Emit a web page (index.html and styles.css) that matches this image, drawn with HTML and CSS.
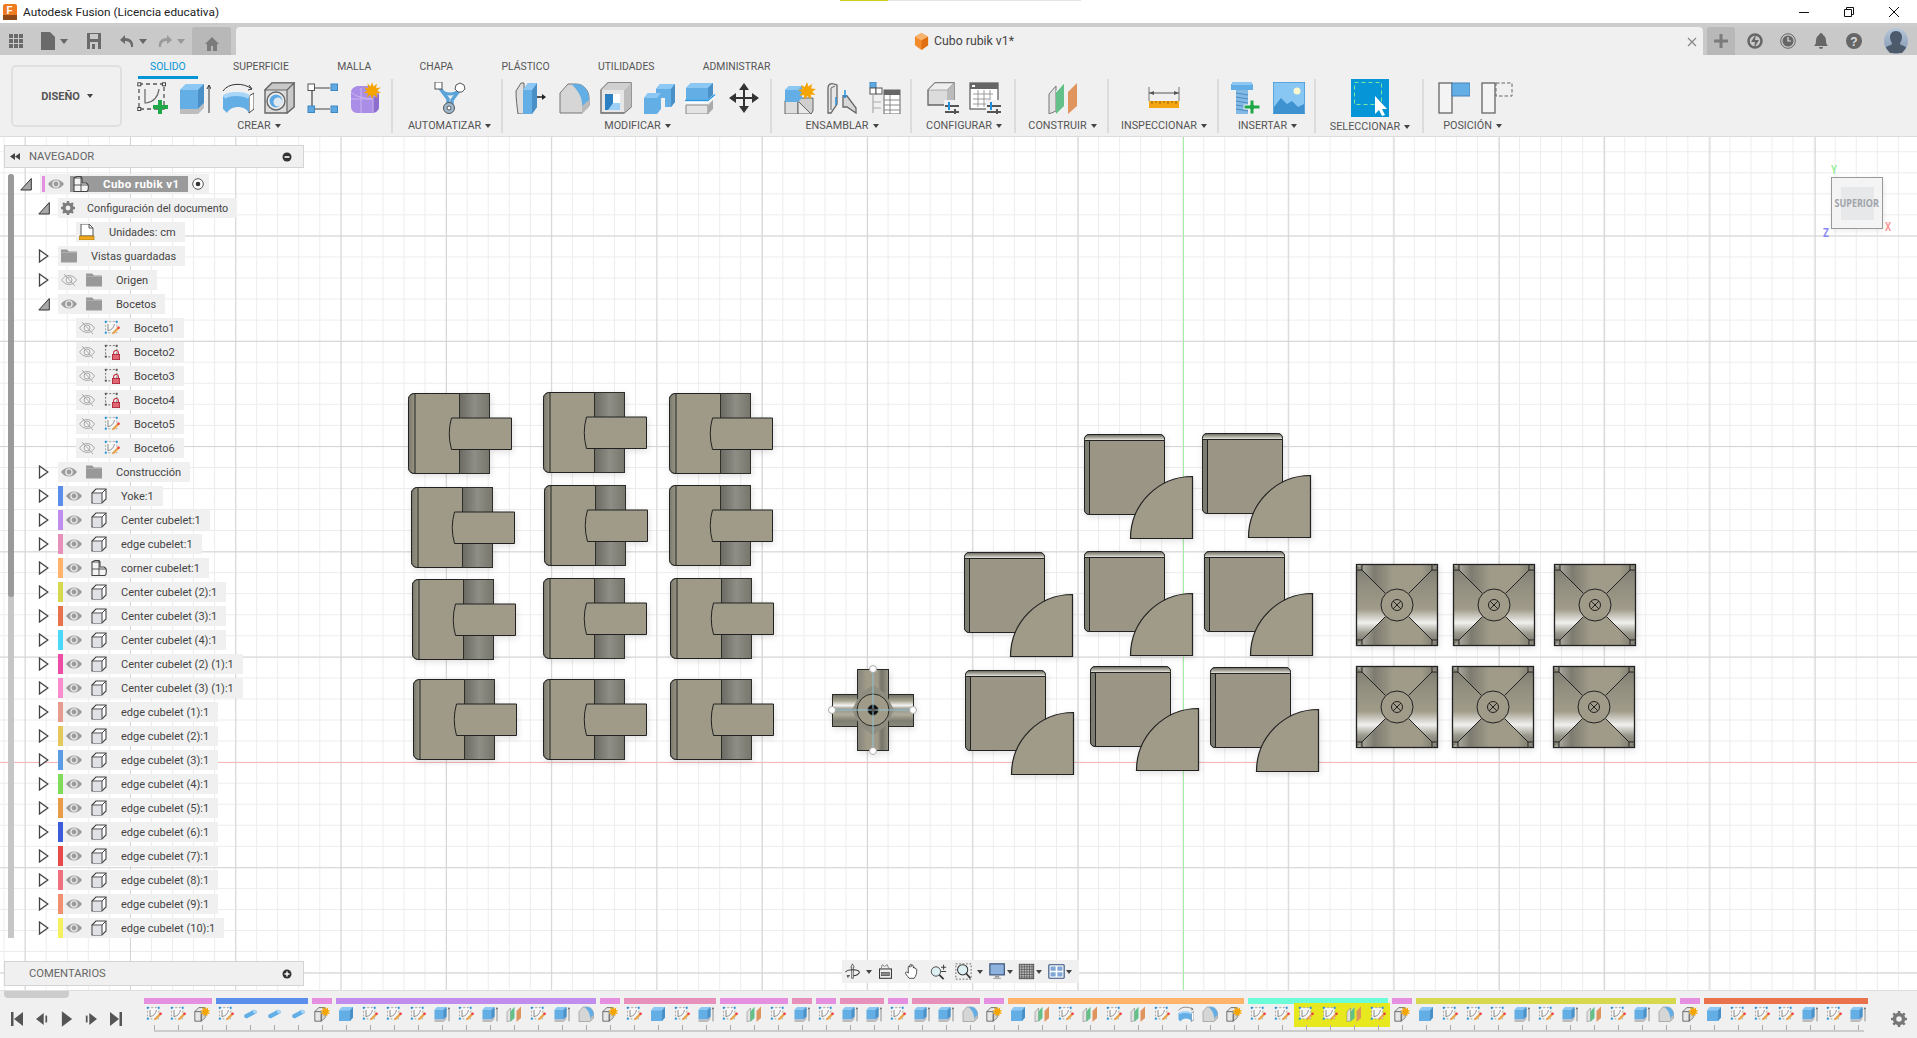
FILE: index.html
```html
<!DOCTYPE html>
<html lang="es">
<head>
<meta charset="utf-8">
<title>Autodesk Fusion</title>
<link rel="stylesheet" href="styles.css">
</head>
<body>
<svg class="sprite" xmlns="http://www.w3.org/2000/svg">
<defs>
<symbol id="sketchnew" viewBox="0 0 32 32"><rect x="2" y="2" width="25" height="25" fill="none" stroke="#555" stroke-width="1.3" stroke-dasharray="4 3"/><rect x=".8" y=".8" width="3" height="3" fill="#fff" stroke="#444"/><rect x="25.5" y=".8" width="3" height="3" fill="#fff" stroke="#444"/><rect x=".8" y="25.5" width="3" height="3" fill="#fff" stroke="#444"/><path d="M8 7v14h2M9 21c7-1 12-6 13-14" fill="none" stroke="#666" stroke-width="1.2"/><path d="M21 18h4v5h6v4h-6v5h-4v-5h-5v-4h5z" fill="#1fa848"/></symbol>
<symbol id="extrude" viewBox="0 0 32 32"><path d="M1 8l6-6h18v19l-6 6H1z" fill="#64aee6"/><path d="M1 8l6-6h18l-6 6z" fill="#8dc8f5"/><path d="M19 8l6-6v19l-6 6z" fill="#4a8fc6"/><path d="M1 27h18l6-6v5l-6 6H1z" fill="#bdbdbd"/><path d="M30 31V4M28 7l2-4 2 4" fill="none" stroke="#333" stroke-width="1"/></symbol>
<symbol id="box" viewBox="0 0 32 32"><path d="M2 9l6-7h22v21l-6 7H2z" fill="#64aee6"/><path d="M2 9l6-7h22l-6 7z" fill="#8dc8f5"/><path d="M24 9l6-7v21l-6 7z" fill="#4a8fc6"/></symbol>
<symbol id="revolve" viewBox="0 0 32 32"><path d="M1 9C6 1 21 0 30 7" fill="none" stroke="#333"/><path d="M27 3l3 4-4 1" fill="none" stroke="#333"/><path d="M27 14l5-3v16l-5 4z" fill="#fff" stroke="#444"/><path d="M1 15c6-6 20-6 26 0l-2 8H3z" fill="#9dd0f6"/><path d="M1 15v12l4 4c4-8 18-8 22 0V15c-5-5-21-5-26 0z" fill="#64aee6"/><path d="M2 15c6-4 19-4 25 0" fill="none" stroke="#a8d6f8" stroke-width="4"/></symbol>
<symbol id="hole" viewBox="0 0 32 32"><path d="M1 8l7-7h22v24l-7 6H1z" fill="#dcdcdc" stroke="#666" stroke-width="1.4"/><path d="M23 8l7-7v24l-7 6zM1 8l7-7h22l-7 7z" fill="#c8c8c8" stroke="#666" stroke-width="1.2"/><circle cx="12" cy="19" r="9" fill="#eee" stroke="#666" stroke-width="1.4"/><circle cx="12" cy="19" r="6.5" fill="#5ea9e2"/><circle cx="14" cy="20" r="4.5" fill="#dfe9f2"/></symbol>
<symbol id="pattern" viewBox="0 0 32 32"><path d="M8 6h15M5 9v15M8 27h15" stroke="#444" stroke-width="1.2" fill="none"/><rect x="1" y="2" width="6.5" height="6.5" fill="#fff" stroke="#555"/><rect x="24" y="2" width="6.5" height="6.5" fill="#5ea9e2" stroke="#3f86bf"/><rect x="1" y="24" width="6.5" height="6.5" fill="#5ea9e2" stroke="#3f86bf"/><rect x="24" y="24" width="6.5" height="6.5" fill="#5ea9e2" stroke="#3f86bf"/></symbol>
<symbol id="form" viewBox="0 0 32 32"><path d="M2 10c0-3 3-5 6-6h14c3 1 8 4 8 8v13c0 3-3 6-6 6H8c-3 0-6-3-6-6z" fill="#a98de6"/><path d="M22 31c4 0 8-3 8-6V12l-6 5v14z" fill="#8d6ecf"/><path d="M2 17h22M12 6v25M2 10c4 4 10 6 22 7v14" fill="none" stroke="#c9b6f0" stroke-width="1"/><path d="M23 0l1.6 4.6 3.4-3.2-1 4.6 4.8-.6-3.6 3.1 4 2.5-4.8.3 1 4.7-3.5-3.2L23 17l-1.6-4.2-3.6 3 1.2-4.6-4.8-.2 4-2.6-3.5-3 4.7.6-1-4.6 3.4 3.2z" fill="#f5a400"/></symbol>
<symbol id="automate" viewBox="0 0 32 32"><path d="M5 5l9 12v9M27 6L18 18v8" fill="none" stroke="#5ba3d9" stroke-width="3.5"/><path d="M8 9c4 4 12 4 16 0" fill="none" stroke="#5ba3d9" stroke-width="3"/><rect x="1" y="0" width="7" height="7" fill="#fff" stroke="#555"/><path d="M22 3l4-2 4 2 1 4-3 3-4 0-3-3z" fill="#fff" stroke="#555"/><circle cx="15" cy="26" r="5.5" fill="#9db8cc" stroke="#555"/><circle cx="15" cy="26" r="2" fill="#fff" stroke="#555"/></symbol>
<symbol id="press" viewBox="0 0 32 32"><path d="M1 9l5-8h3v31H3c-1-8-2-15-2-23z" fill="#dedede" stroke="#666"/><path d="M8 8l5-7h9v24l-5 7H8z" fill="#64aee6"/><path d="M17 8l5-7v24l-5 7z" fill="#4a8fc6"/><path d="M8 8l5-7h9l-5 7z" fill="#8dc8f5"/><path d="M22 15h7" stroke="#222" stroke-width="1.5"/><path d="M27 12l4 3-4 3z" fill="#222"/></symbol>
<symbol id="fillet" viewBox="0 0 32 32"><path d="M2 11l8-9h8c8 0 13 7 13 14v8l-7 7H2z" fill="#d6d6d6" stroke="#777"/><path d="M13 2h5c8 0 13 7 13 14v5l-7 4c1-9-4-17-11-23z" fill="#64aee6"/><path d="M24 32l7-7v-7l-7 6z" fill="#bbb"/></symbol>
<symbol id="shell" viewBox="0 0 32 32"><path d="M1 8l7-7h23v24l-7 6H1z" fill="#e6e6e6" stroke="#666" stroke-width="1.3"/><path d="M24 8l7-7v24l-7 6z" fill="#bdbdbd"/><path d="M1 8l7-7h23l-7 7z" fill="#d0d0d0"/><rect x="5" y="12" width="15" height="16" fill="#fff"/><path d="M5 12h8v9h7v7H5z" fill="#2c7fc0"/><path d="M13 21l7 0v7H8z" fill="#9dd0f6"/></symbol>
<symbol id="combine" viewBox="0 0 32 32"><path d="M13 7l4-5h15v18l-4 5h-6v-9l-9 0z" fill="#64aee6"/><path d="M13 7l4-5h15l-4 5z" fill="#8dc8f5"/><path d="M28 7l4-5v18l-4 5z" fill="#4a8fc6"/><path d="M1 16l4-5h13v16l-4 5H1z" fill="#64aee6"/><path d="M1 16l4-5h13l-4 5z" fill="#8dc8f5"/></symbol>
<symbol id="split" viewBox="0 0 32 32"><path d="M1 6l5-5h22v14l-5 5H1z" fill="#64aee6"/><path d="M1 6l5-5h22l-5 5z" fill="#8dc8f5"/><path d="M23 6l5-5v14l-5 5z" fill="#4a8fc6"/><path d="M0 20h22l8-7" fill="none" stroke="#fff" stroke-width="2.5"/><path d="M0 18.5h23l7-6" fill="none" stroke="#2f9ae0" stroke-width="1.5"/><path d="M1 23h22v9H1z" fill="#e4e4e4" stroke="#888"/><path d="M23 23l5-5v9l-5 5z" fill="#aaa"/></symbol>
<symbol id="move" viewBox="0 0 32 32"><path d="M15 8h2v7h7v-4l7 5-7 5v-4h-7v7h4l-5 7-5-7h4v-7H8v4l-7-5 7-5v4h7V8h-4l5-7 5 7z" fill="#333"/></symbol>
<symbol id="newcomp" viewBox="0 0 32 32"><rect x="1" y="19" width="13" height="13" fill="#ddd" stroke="#666"/><rect x="14" y="19" width="13" height="13" fill="#e8e8e8" stroke="#666"/><path d="M14 19l3-3h12v13l-2 3z" fill="#cfcfcf" stroke="#666"/><path d="M1 8l4-4h13v12l-4 4H1z" fill="#64aee6"/><path d="M1 8l4-4h13l-4 4z" fill="#8dc8f5"/><path d="M23 0l1.4 4.6 3.6-2.6-.8 4.6 4.8.4-3.8 2.8 3.2 3.2-4.6-.5.2 4.5-3.6-3-2.8 3.7-.8-4.7-4.4 1 2.6-3.8-4-2.2 4.6-1-1.8-4.3 4 2.2z" fill="#f5a400"/></symbol>
<symbol id="joint" viewBox="0 0 32 32"><path d="M2 6c0-4 3-5 6-4l3 1v19l-6 9H2z" fill="#e6e6e6" stroke="#666" stroke-width="1.3"/><path d="M17 14l4 0 9 12v5l-9-6h-4z" fill="#d8d8d8" stroke="#666" stroke-width="1.3"/><path d="M9 4l-4 2v22" fill="none" stroke="#666"/><path d="M10 15v8M19 8v8" stroke="#2b8fd8" stroke-width="1.5"/><path d="M17 13l2 3 2-3" fill="none" stroke="#2b8fd8"/></symbol>
<symbol id="bom" viewBox="0 0 32 32"><rect x="1" y="0" width="6" height="6" fill="#5ea9e2" stroke="#3f86bf"/><rect x="1" y="6" width="6" height="6" fill="#fff" stroke="#555"/><rect x="7" y="6" width="6" height="6" fill="#fff" stroke="#555"/><path d="M4 13v18M4 20h8M4 26h8" stroke="#aaa" stroke-width="1.2"/><rect x="15" y="8" width="16" height="24" fill="#fff" stroke="#666"/><rect x="15" y="8" width="16" height="5" fill="#666"/><path d="M15 18h16M15 23h16M15 28h16M21 13v19" stroke="#888"/></symbol>
<symbol id="config" viewBox="0 0 32 32"><path d="M1 8l7-7h19v22H1z" fill="#dcdcdc" stroke="#666" stroke-width="1.3"/><path d="M20 8l7-7v22h-7z" fill="#bbb"/><path d="M1 8l7-7h19l-7 7z" fill="#eee" stroke="#777" stroke-width=".5"/><rect x="17" y="18" width="15" height="14" fill="#f0f0f0"/><path d="M18 24h14M18 30h14" stroke="#555" stroke-width="2"/><rect x="21" y="20" width="2" height="8" fill="#1e90e0"/><rect x="27" y="27" width="2" height="5" fill="#555"/></symbol>
<symbol id="ctable" viewBox="0 0 32 32"><rect x="1" y="1" width="28" height="26" fill="#fff" stroke="#666" stroke-width="1.3"/><rect x="1" y="1" width="28" height="6" fill="#666"/><rect x="3" y="3" width="3" height="2" fill="#fff"/><path d="M4 12h20M4 17h17M4 22h13M9 8v17M15 8v17M21 8v10" stroke="#999"/><rect x="17" y="18" width="15" height="14" fill="#f0f0f0"/><path d="M18 24h14M18 30h14" stroke="#555" stroke-width="2"/><rect x="21" y="20" width="2" height="8" fill="#1e90e0"/><rect x="27" y="27" width="2" height="5" fill="#555"/></symbol>
<symbol id="con" viewBox="0 0 32 32"><path d="M2 12l7-8v25l-7 3z" fill="#e2e2e2" stroke="#777"/><path d="M9 10l8-9v23l-8 8z" fill="#62c088"/><path d="M9 10L17 1" stroke="#fff"/><path d="M21 10l9-9v23l-9 8z" fill="#e0955f"/></symbol>
<symbol id="measure" viewBox="0 0 32 32"><path d="M1 5v14M31 5v14" stroke="#777"/><path d="M1 11h30" stroke="#555"/><path d="M1 11l5-2v4zM31 11l-5-2v4z" fill="#555"/><rect x="1" y="19" width="30" height="7" fill="#f4a610"/><path d="M4 19v3M8 19v2M12 19v3M16 19v2M20 19v3M24 19v2M28 19v3" stroke="#8c5f05"/></symbol>
<symbol id="bolt" viewBox="0 0 32 32"><path d="M1 2h22v6H1z" fill="#64aee6"/><path d="M2 0h20v3H2z" fill="#8dc8f5"/><rect x="6" y="8" width="12" height="24" fill="#82b9e5"/><path d="M6 11l12 2M6 15l12 2M6 19l12 2M6 23l12 2M6 27l12 2" stroke="#4e8dc2" stroke-width="1.2"/><path d="M20 18h4v5h6v4h-6v5h-4v-5h-6v-4h6z" fill="#1fa848" stroke="#f0f0f0"/></symbol>
<symbol id="pic" viewBox="0 0 32 32"><rect x="0" y="0" width="32" height="32" fill="#88c6f3" stroke="#2f84c3"/><circle cx="24" cy="9" r="3.5" fill="#fbf7ce"/><path d="M1 25l7-9 6 6 5-3 6 6 6-3v10H1z" fill="#3f92d0"/></symbol>
<symbol id="select" viewBox="0 0 38 38"><rect width="38" height="38" fill="#0696d7"/><rect x="3.5" y="3.5" width="27" height="22" fill="none" stroke="#7fe8a0" stroke-dasharray="4 3"/><path d="M24 17v18l4-4 3 6 3-1-3-6h5z" fill="#fff"/></symbol>
<symbol id="pos1" viewBox="0 0 32 32"><rect x="1" y="1" width="13" height="30" fill="#f4f4f4" stroke="#666" stroke-width="1.3"/><rect x="14" y="1" width="18" height="13" fill="#64aee6" stroke="#4a84b3"/></symbol>
<symbol id="pos2" viewBox="0 0 32 32"><rect x="1" y="1" width="13" height="30" fill="#f4f4f4" stroke="#666" stroke-width="1.3"/><rect x="15" y="1" width="16" height="13" fill="none" stroke="#666" stroke-dasharray="3.5 2"/></symbol>
<symbol id="sk" viewBox="0 0 20 20"><rect x="2" y="2" width="14" height="14" fill="#f6f6f6" stroke="#999" stroke-dasharray="2.5 2"/><rect x="1" y="1" width="2.4" height="2.4" fill="#1e90e0"/><rect x="14.6" y="1" width="2.4" height="2.4" fill="#1e90e0"/><rect x="1" y="14.6" width="2.4" height="2.4" fill="#1e90e0"/><path d="M5 5v9M5 13c4 0 7-3 8-8" fill="none" stroke="#777"/><path d="M10 18l1-3 6-6 2 2-6 6z" fill="#e8a24a"/><circle cx="18.2" cy="9.8" r="1.6" fill="#ee3a3a"/></symbol>
<symbol id="sklock" viewBox="0 0 20 20"><rect x="2" y="2" width="14" height="14" fill="none" stroke="#555" stroke-dasharray="2.5 2"/><rect x="1" y="1" width="2.4" height="2.4" fill="#555"/><rect x="14.6" y="1" width="2.4" height="2.4" fill="#555"/><rect x="1" y="14.6" width="2.4" height="2.4" fill="#555"/><path d="M12 13v-2a3 3 0 016 0v2" fill="none" stroke="#c0293a" stroke-width="1.3"/><rect x="10.5" y="13" width="9" height="6.5" fill="#e06472" stroke="#a81f30"/></symbol>
<symbol id="cyl" viewBox="0 0 20 20"><path d="M3 11l11-6c3-1 5 1 4 4l-11 6c-3 1-5-1-4-4z" fill="#64aee6"/><path d="M14 5c3-1 5 1 4 4-3 1-5-1-4-4z" fill="#a8d6f8"/></symbol>
<symbol id="comp" viewBox="0 0 20 20"><path d="M1 7l5-5h7v12l-4 5H1z" fill="#e6e6e6" stroke="#555"/><path d="M13 8l-4 3v8l5-4 1-7z" fill="#cfcfcf" stroke="#555" stroke-width=".6"/><path d="M1 7h8v12" fill="none" stroke="#555"/><path d="M14 0l1 3.6 3-2-.8 3.6 3.4.3-3 2 2.4 2.6-3.4-.5v3.4l-2.4-2.5-2.4 2.5v-3.4l-3.4.5 2.4-2.6-3-2 3.4-.3L10 1.6l3 2z" fill="#f5a400"/></symbol>
<symbol id="eye" viewBox="0 0 16 12"><path d="M0 6c4-6 12-6 16 0-4 6-12 6-16 0z" fill="#9c9c9c"/><circle cx="8" cy="6" r="3.8" fill="#e8e8e8"/><circle cx="8" cy="6" r="2.4" fill="#9c9c9c"/></symbol>
<symbol id="eyeoff" viewBox="0 0 16 12"><path d="M.6 6c4-6 11-6 15 0-4 6-11 6-15 0z" fill="none" stroke="#aaa"/><circle cx="8" cy="6" r="3" fill="none" stroke="#aaa"/><path d="M3 0l11 12" stroke="#aaa"/></symbol>
<symbol id="cube" viewBox="0 0 16 16"><path d="M1 5l4-4h10v10l-4 4H1z" fill="#fff" stroke="#444" stroke-width="1.1"/><rect x="2" y="6" width="9" height="9" fill="#dfe1e6"/><path d="M1 5h10v10M11 5l4-4" fill="none" stroke="#444" stroke-width="1"/></symbol>
<symbol id="ccube" viewBox="0 0 16 16"><path d="M1 2l3-1.5h4L9 2v5h4c2 1 3 2 2 7l-1 1.5H1z" fill="#f4f4f4" stroke="#444" stroke-width="1.1"/><path d="M1 9h14M8 1v14M1 2h8" fill="none" stroke="#444" stroke-width=".9"/></symbol>
<symbol id="folder" viewBox="0 0 16 13"><path d="M0 0h6l2 2h8v11H0z" fill="#999"/><path d="M0 3h16" stroke="#bbb" stroke-width=".6"/></symbol>
<symbol id="gear" viewBox="0 0 14 14"><circle cx="7" cy="7" r="4" fill="none" stroke="#7d7d7d" stroke-width="3.200"/><path d="M7 0v3M7 11v3M0 7h3M11 7h3M2 2l2.100 2.100M9.900 9.900L12 12M12 2L9.900 4.100M4.100 9.900L2 12" stroke="#7d7d7d" stroke-width="2.400"/></symbol>
<symbol id="doc" viewBox="0 0 16 16"><path d="M2 0h8l4 4v8H2z" fill="#fff" stroke="#555"/><path d="M10 0v4h4" fill="none" stroke="#555"/><rect x="0" y="12" width="15" height="4" fill="#f0a81c" stroke="#8c6a12" stroke-width=".6"/></symbol>
<symbol id="open" viewBox="0 0 12 14"><path d="M.8 13L11.300 1.500V13z" fill="#a8a8a8" stroke="#333"/></symbol>
<symbol id="closed" viewBox="0 0 12 14"><path d="M1.500 1L9.800 7l-8.300 6z" fill="#fff" stroke="#444" stroke-width="1.300"/></symbol>
</defs>
</svg>

<div class="app">
  <header class="titlebar">
    <svg class="logo" viewBox="0 0 14 16"><rect width="14" height="16" rx="2" fill="#f07a22"/><rect y="11" width="14" height="5" fill="#8f4a1a"/><text x="3.500" y="10" class="logo-f">F</text></svg>
    <span class="app-title">Autodesk Fusion (Licencia educativa)</span>
    <div class="progress"><span class="progress-fill"></span></div>
    <div class="winbtns">
      <svg viewBox="0 0 12 12"><path d="M1 6.500h10" stroke="#111"/></svg>
      <svg viewBox="0 0 12 12"><path d="M1.500 3.500h7v7h-7zM3.500 3.500v-2h7v7h-2" fill="none" stroke="#111"/></svg>
      <svg viewBox="0 0 12 12"><path d="M1 1l10 10M11 1L1 11" stroke="#111" stroke-width="1"/></svg>
    </div>
  </header>
  <div class="strip"></div>
  <div class="tabbar">
    <div class="qat">
      <svg class="q q-apps" viewBox="0 0 14 14"><path d="M0 0h4v4H0zM5 0h4v4H5zM10 0h4v4h-4zM0 5h4v4H0zM5 5h4v4H5zM10 5h4v4h-4zM0 10h4v4H0zM5 10h4v4H5zM10 10h4v4h-4z" fill="#6a6a6a"/></svg>
      <svg class="q q-file" viewBox="0 0 14 18"><path d="M0 0h9l5 5v13H0z" fill="#6a6a6a"/></svg><i class="qcaret"></i>
      <svg class="q q-save" viewBox="0 0 14 16"><path d="M0 0h14v16H0z" fill="#6a6a6a"/><rect x="3" y="1" width="8" height="5" fill="#c9c9c9"/><rect x="3" y="9" width="8" height="7" fill="#c9c9c9"/><rect x="5" y="11" width="3" height="5" fill="#6a6a6a"/></svg>
      <svg class="q q-undo" viewBox="0 0 14 14"><path d="M5 1L0 6l5 4V7c4 0 6 2 6 6h2c1-6-3-9-8-9z" fill="#6a6a6a"/></svg><i class="qcaret"></i>
      <svg class="q q-redo" viewBox="0 0 14 14"><path d="M9 1l5 5-5 4V7c-4 0-6 2-6 6H1C0 7 4 4 9 4z" fill="#9a9a9a"/></svg><i class="qcaret qcaret-dim"></i>
      <div class="homebtn"><svg viewBox="0 0 14 14"><path d="M7 0l7 7h-2v7H8V9H6v5H2V7H0z" fill="#7b7b7b"/></svg></div>
    </div>
    <div class="doctab">
      <svg class="doc-cube" viewBox="0 0 16 18"><path d="M8 0l7 4v9l-7 5-7-5V4z" fill="#f38a2c"/><path d="M1 4l7 4 7-4-7-4z" fill="#f8b36e"/><path d="M8 8v10l7-5V4z" fill="#e06f14"/></svg>
      <span class="doc-name">Cubo rubik v1*</span>
      <svg class="doc-x" viewBox="0 0 10 10"><path d="M1 1l8 8M9 1L1 9" stroke="#888" stroke-width="1.300"/></svg>
    </div>
    <div class="tabright">
      <div class="plusbtn"><svg viewBox="0 0 14 14"><path d="M5.500 0h3v5.500H14v3H8.500V14h-3V8.500H0v-3h5.500z" fill="#7b7b7b"/></svg></div>
      <svg class="r" viewBox="0 0 16 16"><circle cx="8" cy="8" r="6.500" fill="none" stroke="#666" stroke-width="2.500"/><path d="M9 1L4 9h4l-1 6 5-8H8z" fill="#666"/></svg>
      <svg class="r" viewBox="0 0 16 16"><circle cx="8" cy="8" r="7.300" fill="none" stroke="#666" stroke-width="1"/><circle cx="8" cy="8" r="5.500" fill="#666"/><path d="M8 4v4h3" fill="none" stroke="#ddd" stroke-width="1.200"/></svg>
      <svg class="r" viewBox="0 0 16 16"><path d="M8 0c1 0 2 1 2 2 2 1 3 3 3 6 0 3 1 4 2 5H1c1-1 2-2 2-5 0-3 1-5 3-6 0-1 1-2 2-2zM6 14h4c0 1-1 2-2 2s-2-1-2-2z" fill="#666"/></svg>
      <svg class="r" viewBox="0 0 16 16"><circle cx="8" cy="8" r="8" fill="#666"/><text x="8" y="12.500" class="help-q">?</text></svg>
      <svg class="avatar" viewBox="0 0 24 26"><defs><linearGradient id="av" x1="0" x2="0" y1="0" y2="1"><stop offset="0" stop-color="#b8c8dc"/><stop offset="1" stop-color="#7e94b0"/></linearGradient></defs><ellipse cx="12" cy="13" rx="12" ry="13" fill="url(#av)"/><path d="M12 3c4 0 6 3 6 6 0 4-2 5-2 7 2 2 6 2 6 4l-4 5H6l-4-5c0-2 4-2 6-4 0-2-2-3-2-7 0-3 2-6 6-6z" fill="#4c5a6c"/></svg>
    </div>
  </div>

  <section class="ribbon">
    <button class="design">DISEÑO<i class="caret caret-d"></i></button>
    <div class="ribbon-main">
      <nav class="tabs">
        <span class="tab tab-active">SOLIDO</span><span class="tab">SUPERFICIE</span><span class="tab">MALLA</span><span class="tab">CHAPA</span><span class="tab">PLÁSTICO</span><span class="tab">UTILIDADES</span><span class="tab">ADMINISTRAR</span>
      </nav>
      <div class="groups">
        <div class="group g-create"><div class="tools"><svg><use href="#sketchnew"/></svg><svg><use href="#extrude"/></svg><svg><use href="#revolve"/></svg><svg><use href="#hole"/></svg><svg><use href="#pattern"/></svg><svg><use href="#form"/></svg></div><div class="glabel">CREAR<i class="caret"></i></div></div>
        <div class="group g-auto"><div class="tools"><svg><use href="#automate"/></svg></div><div class="glabel">AUTOMATIZAR<i class="caret"></i></div></div>
        <div class="group g-mod"><div class="tools"><svg><use href="#press"/></svg><svg><use href="#fillet"/></svg><svg><use href="#shell"/></svg><svg><use href="#combine"/></svg><svg><use href="#split"/></svg><svg><use href="#move"/></svg></div><div class="glabel">MODIFICAR<i class="caret"></i></div></div>
        <div class="group g-asm"><div class="tools"><svg><use href="#newcomp"/></svg><svg><use href="#joint"/></svg><svg><use href="#bom"/></svg></div><div class="glabel">ENSAMBLAR<i class="caret"></i></div></div>
        <div class="group g-cfg"><div class="tools"><svg><use href="#config"/></svg><svg><use href="#ctable"/></svg></div><div class="glabel">CONFIGURAR<i class="caret"></i></div></div>
        <div class="group g-con"><div class="tools"><svg><use href="#con"/></svg></div><div class="glabel">CONSTRUIR<i class="caret"></i></div></div>
        <div class="group g-ins"><div class="tools"><svg><use href="#measure"/></svg></div><div class="glabel">INSPECCIONAR<i class="caret"></i></div></div>
        <div class="group g-inr"><div class="tools"><svg><use href="#bolt"/></svg><svg><use href="#pic"/></svg></div><div class="glabel">INSERTAR<i class="caret"></i></div></div>
        <div class="group g-sel"><div class="tools"><svg class="tool-select"><use href="#select"/></svg></div><div class="glabel">SELECCIONAR<i class="caret"></i></div></div>
        <div class="group g-pos"><div class="tools"><svg><use href="#pos1"/></svg><svg><use href="#pos2"/></svg></div><div class="glabel glabel-pos">POSICIÓN<i class="caret"></i></div></div>
      </div>
    </div>
  </section>

  <main class="viewport">
    <svg class="models" viewBox="0 137 1917 853" xmlns="http://www.w3.org/2000/svg">
      <defs>
        <linearGradient id="cylg"><stop offset="0" stop-color="#6b6a62"/><stop offset=".5" stop-color="#8f8e86"/><stop offset="1" stop-color="#77766c"/></linearGradient>
        <linearGradient id="capg"><stop offset="0" stop-color="#7a796e"/><stop offset="1" stop-color="#9a9684"/></linearGradient>
        <linearGradient id="capv" x1="0" x2="0" y1="0" y2="1"><stop offset="0" stop-color="#62615a"/><stop offset=".6" stop-color="#b8b6aa"/><stop offset="1" stop-color="#eeeeea"/></linearGradient>
        <linearGradient id="tileh"><stop offset="0" stop-color="#bdbcb2"/><stop offset=".22" stop-color="#7d7b70"/><stop offset=".45" stop-color="#a09b89"/><stop offset=".8" stop-color="#a09b89"/><stop offset="1" stop-color="#77766b"/></linearGradient>
        <linearGradient id="tilev" x1="0" x2="0" y1="0" y2="1"><stop offset="0" stop-color="#7a796e"/><stop offset=".25" stop-color="#918e7f"/><stop offset=".55" stop-color="#a09b89"/><stop offset=".72" stop-color="#f0f0ee"/><stop offset=".85" stop-color="#9c9a8e"/><stop offset="1" stop-color="#6c6b61"/></linearGradient>
        <linearGradient id="crossh" x1="0" x2="0" y1="0" y2="1"><stop offset="0" stop-color="#6e6d62"/><stop offset=".2" stop-color="#a8a492"/><stop offset=".34" stop-color="#f4f4f2"/><stop offset=".46" stop-color="#96958a"/><stop offset=".62" stop-color="#b0ac9c"/><stop offset=".82" stop-color="#7f7e72"/><stop offset="1" stop-color="#8a8879"/></linearGradient>
        <linearGradient id="crossv"><stop offset="0" stop-color="#85847a"/><stop offset=".3" stop-color="#a09b89"/><stop offset=".65" stop-color="#a09b89"/><stop offset=".78" stop-color="#75746a"/><stop offset="1" stop-color="#9a9888"/></linearGradient>
        <filter id="sh" x="-10%" y="-10%" width="125%" height="125%"><feDropShadow dx="1" dy="2" stdDeviation="3" flood-color="#000" flood-opacity=".12"/></filter>
        <g id="edge" stroke="#222" stroke-width="1">
          <path d="M6.500 0H51V80H6.500C2 80 0 77 0 74V6C0 3 2 0 6.500 0z" fill="#9f9a88"/>
          <path d="M6.500 0V80C2 80 0 77 0 74V6C0 3 2 0 6.500 0z" fill="url(#capg)"/>
          <rect x="51" width="30" height="80" fill="url(#cylg)" stroke="#2e2e2a"/>
          <path d="M43 24.500H103V56H43Q38.500 40 43 24.500z" fill="#a09b89"/>
        </g>
        <g id="corner" stroke="#222" stroke-width="1">
          <rect width="80" height="80" rx="5" fill="#9a9584"/>
          <path d="M5 0H75Q80 0 80 5V6H0V5Q0 0 5 0z" fill="url(#capv)"/>
          <path d="M5 6V80Q0 80 0 75V6z" fill="#7c7b70"/>
          <path d="M46 104A62 62 0 0 1 108 42V104z" fill="#a09b89" stroke-width="1.200"/>
        </g>
        <g id="tile" stroke="#222" stroke-width="1">
          <path d="M0 0H81L52 29H29z" fill="url(#tileh)" stroke="none"/>
          <path d="M0 81H81L52 52H29z" fill="url(#tileh)" stroke="none"/>
          <path d="M0 0V81L29 52V29z" fill="url(#tilev)" stroke="none"/>
          <path d="M81 0V81L52 52V29z" fill="url(#tilev)" stroke="none"/>
          <rect width="81" height="81" fill="none" stroke-width="1.300"/>
          <path d="M5 5L29 29M76 5L52 29M5 76L29 52M76 76L52 52"/>
          <path d="M0 5.500H5.500V0M81 5.500H75.500V0M0 75.500H5.500V81M81 75.500H75.500V81" fill="#8f8c7d"/>
          <circle cx="40.500" cy="40.500" r="16" fill="#a09b89"/>
          <circle cx="40.500" cy="40.500" r="5.500" fill="none"/>
          <path d="M36.600 36.600L44.400 44.400M44.400 36.600L36.600 44.400"/>
        </g>
      </defs>
      <g filter="url(#sh)">
        <use href="#edge" x="408.500" y="393.500"/><use href="#edge" x="543.500" y="392.500"/><use href="#edge" x="669.500" y="393.500"/>
        <use href="#edge" x="411.500" y="487.500"/><use href="#edge" x="544.500" y="485.500"/><use href="#edge" x="669.500" y="485.500"/>
        <use href="#edge" x="412.500" y="579.500"/><use href="#edge" x="543.500" y="578.500"/><use href="#edge" x="670.500" y="578.500"/>
        <use href="#edge" x="413.500" y="679.500"/><use href="#edge" x="543.500" y="679.500"/><use href="#edge" x="670.500" y="679.500"/>
        <use href="#corner" x="1084.500" y="434.500"/><use href="#corner" x="1202.500" y="433.500"/>
        <use href="#corner" x="964.500" y="552.500"/><use href="#corner" x="1084.500" y="551.500"/><use href="#corner" x="1204.500" y="551.500"/>
        <use href="#corner" x="965.500" y="670.500"/><use href="#corner" x="1090.500" y="666.500"/><use href="#corner" x="1210.500" y="667.500"/>
        <use href="#tile" x="1356.500" y="564.500"/><use href="#tile" x="1453.500" y="564.500"/><use href="#tile" x="1554.500" y="564.500"/>
        <use href="#tile" x="1356.500" y="666.500"/><use href="#tile" x="1452.500" y="666.500"/><use href="#tile" x="1553.500" y="666.500"/>
        <g stroke="#2a2a26">
          <rect x="832.500" y="694.500" width="81" height="32" fill="url(#crossh)"/>
          <rect x="857.500" y="669.500" width="31" height="81" fill="url(#crossv)"/>
          <path d="M860 694l13-9 13 9 8 16-8 16-13 9-13-9-8-16z" fill="#8f8d80" stroke="none"/>
          <circle cx="873" cy="710" r="16" fill="#a09b89"/>
          <circle cx="873" cy="710" r="5" fill="#111"/>
        </g>
        <path d="M873 668V752M833 710H913" stroke="#8fc3d8" fill="none" stroke-width="1"/>
        <circle cx="873" cy="710" r="2" fill="#555"/>
        <g fill="#fff" stroke="#aaa"><circle cx="873" cy="669" r="3.500"/><circle cx="873" cy="751" r="3.500"/><circle cx="832" cy="710" r="3.500"/><circle cx="913" cy="710" r="3.500"/></g>
      </g>
    </svg>

    <aside class="browser">
      <div class="panel-head"><svg class="chev" viewBox="0 0 10 7"><path d="M5 0v7L0 3.500zM10 0v7L5 3.500z" fill="#444"/></svg><span class="panel-title">NAVEGADOR</span><svg class="panel-btn" viewBox="0 0 10 10"><circle cx="5" cy="5" r="4.500" fill="#333"/><rect x="2.500" y="4.200" width="5" height="1.600" fill="#fff"/></svg></div>
      <div class="tree-wrap">
        <div class="scrollbar"><div class="scroll-thumb"></div></div>
        <div class="tree">
          <div class="row l0"><svg class="tw"><use href="#open"/></svg><div class="chip chip-root"><i class="bar bar-root"></i><svg class="eye"><use href="#eye"/></svg><div class="sel"><svg class="ico"><use href="#ccube"/></svg><span class="sel-name">Cubo rubik v1</span></div><svg class="radio" viewBox="0 0 12 12"><circle cx="6" cy="6" r="5.300" fill="#fff" stroke="#555"/><circle cx="6" cy="6" r="2.300" fill="#333"/></svg></div></div>
          <div class="row l1"><svg class="tw"><use href="#open"/></svg><div class="chip p3"><svg class="ico-gear"><use href="#gear"/></svg><span class="lbl lbl-13">Configuración del documento</span></div></div>
          <div class="row l2"><div class="chip p3"><svg class="ico"><use href="#doc"/></svg><span class="lbl lbl-15">Unidades: cm</span></div></div>
          <div class="row l1"><svg class="tw"><use href="#closed"/></svg><div class="chip p3"><svg class="ico"><use href="#folder"/></svg><span class="lbl">Vistas guardadas</span></div></div>
          <div class="row l1"><svg class="tw"><use href="#closed"/></svg><div class="chip p3"><svg class="eye"><use href="#eyeoff"/></svg><svg class="ico m9"><use href="#folder"/></svg><span class="lbl">Origen</span></div></div>
          <div class="row l1"><svg class="tw"><use href="#open"/></svg><div class="chip p3"><svg class="eye"><use href="#eye"/></svg><svg class="ico m9"><use href="#folder"/></svg><span class="lbl">Bocetos</span></div></div>
          <div class="row l2"><div class="chip p3"><svg class="eye"><use href="#eyeoff"/></svg><svg class="ico m9"><use href="#sk"/></svg><span class="lbl">Boceto1</span></div></div>
          <div class="row l2"><div class="chip p3"><svg class="eye"><use href="#eyeoff"/></svg><svg class="ico m9"><use href="#sklock"/></svg><span class="lbl">Boceto2</span></div></div>
          <div class="row l2"><div class="chip p3"><svg class="eye"><use href="#eyeoff"/></svg><svg class="ico m9"><use href="#sklock"/></svg><span class="lbl">Boceto3</span></div></div>
          <div class="row l2"><div class="chip p3"><svg class="eye"><use href="#eyeoff"/></svg><svg class="ico m9"><use href="#sklock"/></svg><span class="lbl">Boceto4</span></div></div>
          <div class="row l2"><div class="chip p3"><svg class="eye"><use href="#eyeoff"/></svg><svg class="ico m9"><use href="#sk"/></svg><span class="lbl">Boceto5</span></div></div>
          <div class="row l2"><div class="chip p3"><svg class="eye"><use href="#eyeoff"/></svg><svg class="ico m9"><use href="#sk"/></svg><span class="lbl">Boceto6</span></div></div>
          <div class="row l1"><svg class="tw"><use href="#closed"/></svg><div class="chip p3"><svg class="eye"><use href="#eye"/></svg><svg class="ico m9"><use href="#folder"/></svg><span class="lbl">Construcción</span></div></div>
          <div class="row l1"><svg class="tw"><use href="#closed"/></svg><div class="chip"><i class="bar" style="background:#5b8dec"></i><svg class="eye"><use href="#eye"/></svg><svg class="ico m9"><use href="#cube"/></svg><span class="lbl">Yoke:1</span></div></div>
          <div class="row l1"><svg class="tw"><use href="#closed"/></svg><div class="chip"><i class="bar" style="background:#c08cee"></i><svg class="eye"><use href="#eye"/></svg><svg class="ico m9"><use href="#cube"/></svg><span class="lbl">Center cubelet:1</span></div></div>
          <div class="row l1"><svg class="tw"><use href="#closed"/></svg><div class="chip"><i class="bar" style="background:#e890bc"></i><svg class="eye"><use href="#eye"/></svg><svg class="ico m9"><use href="#cube"/></svg><span class="lbl">edge cubelet:1</span></div></div>
          <div class="row l1"><svg class="tw"><use href="#closed"/></svg><div class="chip"><i class="bar" style="background:#ffb36b"></i><svg class="eye"><use href="#eye"/></svg><svg class="ico m9"><use href="#ccube"/></svg><span class="lbl">corner cubelet:1</span></div></div>
          <div class="row l1"><svg class="tw"><use href="#closed"/></svg><div class="chip"><i class="bar" style="background:#d6d84e"></i><svg class="eye"><use href="#eye"/></svg><svg class="ico m9"><use href="#cube"/></svg><span class="lbl">Center cubelet (2):1</span></div></div>
          <div class="row l1"><svg class="tw"><use href="#closed"/></svg><div class="chip"><i class="bar" style="background:#e9724c"></i><svg class="eye"><use href="#eye"/></svg><svg class="ico m9"><use href="#cube"/></svg><span class="lbl">Center cubelet (3):1</span></div></div>
          <div class="row l1"><svg class="tw"><use href="#closed"/></svg><div class="chip"><i class="bar" style="background:#4cd8f8"></i><svg class="eye"><use href="#eye"/></svg><svg class="ico m9"><use href="#cube"/></svg><span class="lbl">Center cubelet (4):1</span></div></div>
          <div class="row l1"><svg class="tw"><use href="#closed"/></svg><div class="chip"><i class="bar" style="background:#ec4ca4"></i><svg class="eye"><use href="#eye"/></svg><svg class="ico m9"><use href="#cube"/></svg><span class="lbl">Center cubelet (2) (1):1</span></div></div>
          <div class="row l1"><svg class="tw"><use href="#closed"/></svg><div class="chip"><i class="bar" style="background:#fc8cd0"></i><svg class="eye"><use href="#eye"/></svg><svg class="ico m9"><use href="#cube"/></svg><span class="lbl">Center cubelet (3) (1):1</span></div></div>
          <div class="row l1"><svg class="tw"><use href="#closed"/></svg><div class="chip"><i class="bar" style="background:#e89c90"></i><svg class="eye"><use href="#eye"/></svg><svg class="ico m9"><use href="#cube"/></svg><span class="lbl">edge cubelet (1):1</span></div></div>
          <div class="row l1"><svg class="tw"><use href="#closed"/></svg><div class="chip"><i class="bar" style="background:#e4c85c"></i><svg class="eye"><use href="#eye"/></svg><svg class="ico m9"><use href="#cube"/></svg><span class="lbl">edge cubelet (2):1</span></div></div>
          <div class="row l1"><svg class="tw"><use href="#closed"/></svg><div class="chip"><i class="bar" style="background:#5c9ce4"></i><svg class="eye"><use href="#eye"/></svg><svg class="ico m9"><use href="#cube"/></svg><span class="lbl">edge cubelet (3):1</span></div></div>
          <div class="row l1"><svg class="tw"><use href="#closed"/></svg><div class="chip"><i class="bar" style="background:#80dc58"></i><svg class="eye"><use href="#eye"/></svg><svg class="ico m9"><use href="#cube"/></svg><span class="lbl">edge cubelet (4):1</span></div></div>
          <div class="row l1"><svg class="tw"><use href="#closed"/></svg><div class="chip"><i class="bar" style="background:#e89c48"></i><svg class="eye"><use href="#eye"/></svg><svg class="ico m9"><use href="#cube"/></svg><span class="lbl">edge cubelet (5):1</span></div></div>
          <div class="row l1"><svg class="tw"><use href="#closed"/></svg><div class="chip"><i class="bar" style="background:#3c5cdc"></i><svg class="eye"><use href="#eye"/></svg><svg class="ico m9"><use href="#cube"/></svg><span class="lbl">edge cubelet (6):1</span></div></div>
          <div class="row l1"><svg class="tw"><use href="#closed"/></svg><div class="chip"><i class="bar" style="background:#e84848"></i><svg class="eye"><use href="#eye"/></svg><svg class="ico m9"><use href="#cube"/></svg><span class="lbl">edge cubelet (7):1</span></div></div>
          <div class="row l1"><svg class="tw"><use href="#closed"/></svg><div class="chip"><i class="bar" style="background:#f07080"></i><svg class="eye"><use href="#eye"/></svg><svg class="ico m9"><use href="#cube"/></svg><span class="lbl">edge cubelet (8):1</span></div></div>
          <div class="row l1"><svg class="tw"><use href="#closed"/></svg><div class="chip"><i class="bar" style="background:#f09070"></i><svg class="eye"><use href="#eye"/></svg><svg class="ico m9"><use href="#cube"/></svg><span class="lbl">edge cubelet (9):1</span></div></div>
          <div class="row l1"><svg class="tw"><use href="#closed"/></svg><div class="chip"><i class="bar" style="background:#f4f060"></i><svg class="eye"><use href="#eye"/></svg><svg class="ico m9"><use href="#cube"/></svg><span class="lbl">edge cubelet (10):1</span></div></div>
        </div>
      </div>
    </aside>

    <div class="comments"><span class="panel-title">COMENTARIOS</span><svg class="panel-btn" viewBox="0 0 10 10"><circle cx="5" cy="5" r="4.500" fill="#333"/><path d="M2.500 5h5M5 2.500v5" stroke="#fff" stroke-width="1.400"/></svg></div>

    <div class="navbar">
      <svg class="nav nav-c" viewBox="0 0 20 20"><path d="M10 1l2 4h-1v13H9V5H8z" fill="#f0f0f0" stroke="#333" stroke-width=".8"/><path d="M2 11c0-2 4-3 8-3s8 1 8 3-4 4-7 4M7 15l-3 0 1 2" fill="none" stroke="#333" stroke-width="1.200"/></svg><i class="ncaret"></i>
      <svg class="nav nav-l" viewBox="0 0 20 20"><rect x="3" y="7" width="14" height="11" fill="#eee" stroke="#333" stroke-width="1.200"/><rect x="5.500" y="11" width="9" height="4" fill="#888" stroke="#333" stroke-width=".6"/><path d="M5 7l1-5 3 2 3-2 2 5" fill="none" stroke="#777"/></svg>
      <svg class="nav" viewBox="0 0 20 20"><path d="M6 18c-2-3-5-5-4-7 1-1 2 0 3 1V5c0-2 2-2 2 0V3c0-2 2-2 2 0v1c0-2 2-2 2 0v2c0-2 2-1 2 0v1c1-1 2 0 2 1 0 5-1 7-3 10z" fill="#fff" stroke="#333"/></svg>
      <svg class="nav nav-z" viewBox="0 0 20 20"><circle cx="7" cy="10" r="5.500" fill="#dff0f4" stroke="#333"/><path d="M11 14l5 5" stroke="#333" stroke-width="2"/><path d="M13 5h6M16 2v6M13 10h6" stroke="#333" stroke-width="1.100"/></svg>
      <svg class="nav nav-c" viewBox="0 0 20 20"><rect x="1" y="1" width="18" height="18" fill="none" stroke="#555" stroke-dasharray="2 2"/><circle cx="9" cy="8" r="6" fill="#dff0f4" stroke="#333" stroke-width="1.200"/><path d="M13 12l5 6" stroke="#333" stroke-width="2"/></svg><i class="ncaret"></i>
      <svg class="nav nav-t" viewBox="0 0 20 20"><rect x="1" y="1" width="17" height="13" fill="#8db2de" stroke="#33496b" stroke-width="1.300"/><path d="M7 15h5v2H7z" fill="#999"/><path d="M5 18h9" stroke="#888"/></svg><i class="ncaret"></i>
      <svg class="nav nav-t" viewBox="0 0 20 20"><rect x="1.500" y="1.500" width="17" height="17" fill="#bbb" stroke="#444"/><path d="M4.500 1.500v17M7.500 1.500v17M10.500 1.500v17M13.500 1.500v17M16.500 1.500v17M1.500 4.500h17M1.500 7.500h17M1.500 10.500h17M1.500 13.500h17M1.500 16.500h17" stroke="#444" stroke-width=".7"/></svg><i class="ncaret"></i>
      <svg class="nav nav-t" viewBox="0 0 20 20"><rect x="1" y="2" width="18" height="16" rx="1" fill="#fff" stroke="#2d4a7a" stroke-width="1.300"/><path d="M3 4h6v5H3zM11 4h6v5h-6zM3 11h6v5H3zM11 11h6v5h-6z" fill="#7fa6d6"/></svg><i class="ncaret"></i>
    </div>

    <div class="viewcube">
      <span class="axis ax-y">Y</span><span class="axis ax-z">Z</span><span class="axis ax-x">X</span>
      <div class="vc-face"><div class="vc-inner"><span class="vc-text">SUPERIOR</span></div></div>
    </div>
  </main>

  <footer class="timeline">
    <div class="hscroll"></div>
    <div class="player">
      <svg viewBox="0 0 12 14"><rect width="2.500" height="14" fill="#555"/><path d="M12 0v14L3 7z" fill="#555"/></svg>
      <svg viewBox="0 0 14 14"><path d="M9 0v14L0 7z" fill="#555"/><rect x="11" y="3" width="2" height="8" fill="#555"/></svg>
      <svg viewBox="0 0 14 18"><path d="M1 0v18l12-9z" fill="#555"/></svg>
      <svg viewBox="0 0 14 14"><rect x="1" y="3" width="2" height="8" fill="#555"/><path d="M5 0v14l9-7z" fill="#555"/></svg>
      <svg viewBox="0 0 12 14"><path d="M0 0v14l9-7z" fill="#555"/><rect x="9.500" width="2.500" height="14" fill="#555"/></svg>
    </div>
    <div class="track">
      <div class="tg pink"><b></b><div class="ti"><i><svg><use href="#sk"/></svg></i><i><svg><use href="#sk"/></svg></i><i><svg><use href="#comp"/></svg></i></div></div>
      <div class="tg blue"><b></b><div class="ti"><i><svg><use href="#sk"/></svg></i><i><svg><use href="#cyl"/></svg></i><i><svg><use href="#cyl"/></svg></i><i><svg><use href="#cyl"/></svg></i></div></div>
      <div class="tg pink"><b></b><div class="ti"><i><svg><use href="#comp"/></svg></i></div></div>
      <div class="tg purple"><b></b><div class="ti"><i><svg><use href="#box"/></svg></i><i><svg><use href="#sk"/></svg></i><i><svg><use href="#sk"/></svg></i><i><svg><use href="#sk"/></svg></i><i><svg><use href="#extrude"/></svg></i><i><svg><use href="#sk"/></svg></i><i><svg><use href="#extrude"/></svg></i><i><svg><use href="#con"/></svg></i><i><svg><use href="#sk"/></svg></i><i><svg><use href="#extrude"/></svg></i><i><svg><use href="#fillet"/></svg></i></div></div>
      <div class="tg pink"><b></b><div class="ti"><i><svg><use href="#comp"/></svg></i></div></div>
      <div class="tg rose"><b></b><div class="ti"><i><svg><use href="#sk"/></svg></i><i><svg><use href="#box"/></svg></i><i><svg><use href="#sk"/></svg></i><i><svg><use href="#extrude"/></svg></i></div></div>
      <div class="tg pink"><b></b><div class="ti"><i><svg><use href="#sk"/></svg></i><i><svg><use href="#con"/></svg></i><i><svg><use href="#sk"/></svg></i></div></div>
      <div class="tg rose"><b></b><div class="ti"><i><svg><use href="#extrude"/></svg></i></div></div>
      <div class="tg pink"><b></b><div class="ti"><i><svg><use href="#sk"/></svg></i></div></div>
      <div class="tg rose"><b></b><div class="ti"><i><svg><use href="#extrude"/></svg></i><i><svg><use href="#extrude"/></svg></i></div></div>
      <div class="tg pink"><b></b><div class="ti"><i><svg><use href="#sk"/></svg></i></div></div>
      <div class="tg rose"><b></b><div class="ti"><i><svg><use href="#extrude"/></svg></i><i><svg><use href="#extrude"/></svg></i><i><svg><use href="#fillet"/></svg></i></div></div>
      <div class="tg pink"><b></b><div class="ti"><i><svg><use href="#comp"/></svg></i></div></div>
      <div class="tg orange"><b></b><div class="ti"><i><svg><use href="#box"/></svg></i><i><svg><use href="#con"/></svg></i><i><svg><use href="#sk"/></svg></i><i><svg><use href="#con"/></svg></i><i><svg><use href="#sk"/></svg></i><i><svg><use href="#con"/></svg></i><i><svg><use href="#sk"/></svg></i><i><svg><use href="#revolve"/></svg></i><i><svg><use href="#fillet"/></svg></i><i><svg><use href="#comp"/></svg></i></div></div>
      <div class="tg mint"><b></b><div class="ti"><i><svg><use href="#sk"/></svg></i><i><svg><use href="#sk"/></svg></i><i class="hl"><svg><use href="#sk"/></svg></i><i class="hl"><svg><use href="#sk"/></svg></i><i class="hl"><svg><use href="#con"/></svg></i><i class="hl"><svg><use href="#sk"/></svg></i></div></div>
      <div class="tg pink"><b></b><div class="ti"><i><svg><use href="#comp"/></svg></i></div></div>
      <div class="tg lime"><b></b><div class="ti"><i><svg><use href="#box"/></svg></i><i><svg><use href="#sk"/></svg></i><i><svg><use href="#sk"/></svg></i><i><svg><use href="#sk"/></svg></i><i><svg><use href="#extrude"/></svg></i><i><svg><use href="#sk"/></svg></i><i><svg><use href="#extrude"/></svg></i><i><svg><use href="#con"/></svg></i><i><svg><use href="#sk"/></svg></i><i><svg><use href="#extrude"/></svg></i><i><svg><use href="#fillet"/></svg></i></div></div>
      <div class="tg pink"><b></b><div class="ti"><i><svg><use href="#comp"/></svg></i></div></div>
      <div class="tg coral"><b></b><div class="ti"><i><svg><use href="#box"/></svg></i><i><svg><use href="#sk"/></svg></i><i><svg><use href="#sk"/></svg></i><i><svg><use href="#sk"/></svg></i><i><svg><use href="#extrude"/></svg></i><i><svg><use href="#sk"/></svg></i><i><svg><use href="#extrude"/></svg></i></div></div>
    </div>
    <svg class="tl-gear" viewBox="0 0 16 16"><circle cx="8" cy="8" r="4.500" fill="none" stroke="#777" stroke-width="3.500"/><path d="M8 0v3M8 13v3M0 8h3M13 8h3M2.300 2.300l2 2M11.700 11.700l2 2M13.700 2.300l-2 2M4.300 11.700l-2 2" stroke="#777" stroke-width="2.600"/></svg>
  </footer>
</div>
</body>
</html>
```
FILE: styles.css
```css
*{box-sizing:border-box}
html,body{margin:0;height:100%;overflow:hidden}
body{font-family:Roboto,"Liberation Sans",sans-serif;font-size:11px;color:#555;background:#fff}
.sprite{display:block;width:0;height:0}
i{font-style:normal}
svg{display:block;flex:none}

.app{display:flex;flex-direction:column;width:1917px;height:1038px}

/* title bar */
.titlebar{height:23px;display:flex;align-items:center;padding-left:3px;background:#fff;position:relative}
.logo{width:14px;height:16px}
.logo-f{font:bold 10px "Liberation Sans",sans-serif;fill:#fff}
.app-title{margin-left:6px;font:11.800px Roboto,sans-serif;color:#222}
.progress{position:absolute;left:840px;top:0;width:241px;height:1px;background:#e4e4e4}
.progress-fill{display:block;width:48px;height:1px;background:#cfcf20}
.winbtns{margin-left:auto;display:flex;gap:33px;padding-right:17px}
.winbtns svg{width:12px;height:12px}
.strip{height:4px;background:#ccc}

/* tabs bar */
.tabbar{height:28px;display:flex;background:#c9c9c9}
.qat{width:236px;display:flex;align-items:center;padding-left:9px}
.q-apps{width:14px;height:14px}
.q-file{width:14px;height:18px;margin-left:18px}
.qcaret{width:0;height:0;border:4px solid transparent;border-top:5px solid #666;border-bottom:0;margin-left:5px}
.qcaret-dim{border-top-color:#999}
.q-save{width:14px;height:16px;margin-left:19px}
.q-undo{width:14px;height:14px;margin-left:19px}
.q-redo{width:14px;height:14px;margin-left:11px}
.homebtn{width:39px;height:28px;margin-left:7px;background:#b8b8b8;border-radius:3px 3px 0 0;display:flex;align-items:center;justify-content:center;padding-top:6px}
.homebtn svg{width:14px;height:14px}
.doctab{flex:none;width:1467px;height:28px;background:#f0f0f0;border-radius:4px 4px 0 0;display:flex;align-items:center;justify-content:center;position:relative;padding-right:11px}
.doc-cube{width:15px;height:17px}
.doc-name{margin-left:5px;font-size:12.300px;color:#444}
.doc-x{position:absolute;right:6px;top:10px;width:10px;height:10px}
.tabright{flex:1;display:flex;align-items:center;padding-left:4px}
.plusbtn{width:28px;height:28px;background:#b8b8b8;border-radius:3px 3px 0 0;display:flex;align-items:center;justify-content:center}
.plusbtn svg{width:14px;height:14px}
.r{width:16px;height:16px;margin-left:17px}
.tabright .plusbtn + .r{margin-left:12px}
.avatar{width:24px;height:26px;margin-left:22px}
.help-q{font:bold 12px "Liberation Sans",sans-serif;fill:#ddd;text-anchor:middle}

/* ribbon */
.ribbon{height:82px;background:#f0f0f0;border-bottom:1px solid #dcdcdc;display:flex;padding-left:11px}
.design{width:111px;height:62px;margin:10px 3px 0 0;border:2px solid #e0e0e0;border-radius:5px;background:#f0f0f0;display:flex;align-items:center;justify-content:center;font:bold 11px Roboto,sans-serif;color:#555;padding-left:7px}
.caret{display:inline-block;width:0;height:0;border:3.500px solid transparent;border-top:4px solid #444;border-bottom:0;margin-left:4px;vertical-align:1px}
.caret-d{margin-left:7px}
.ribbon-main{display:flex;flex-direction:column}
.tabs{height:24px;display:flex;gap:24.300px;padding-left:13px}
.tab{height:24px;padding:5px 12px 0;color:#555;font-size:10.400px;line-height:13px}
.tab-active{color:#0696d7;border-bottom:3px solid #0696d7;margin-right:-1px}
.groups{display:flex}
.group{height:54px;display:flex;flex-direction:column;align-items:center;border-right:2px solid #dcdcdc;padding-left:2px}
.g-create{width:268px}.g-auto{width:110px;padding-left:5px}.g-mod{width:269px}.g-asm{width:140px}.g-cfg{width:104px}.g-con{width:93px}.g-ins{width:110px}.g-inr{width:97px}.g-sel{width:108px}
.g-pos{width:101px;border-right:0}
.tools{height:38px;display:flex;align-items:center;gap:10.500px}
.tools svg{width:32px;height:32px}
.tools .tool-select{width:38px;height:38px}
.glabel{margin-top:3px;height:14px;line-height:14px;color:#555;font-size:10.800px;white-space:nowrap}
.glabel-pos{margin-right:6px}

/* viewport */
.viewport{flex:none;height:853px;position:relative;overflow:hidden;background-color:#fff;
  background-image:
    linear-gradient(#f8b8b8,#f8b8b8),
    linear-gradient(#a4efa4,#a4efa4),
    linear-gradient(to right,#d4d4d4 1px,transparent 1px),
    linear-gradient(#d4d4d4 1px,transparent 1px),
    linear-gradient(to right,#ececec 1px,transparent 1px),
    linear-gradient(#ececec 1px,transparent 1px);
  background-size:100% 1px,1px 100%,105.300px 105.300px,105.300px 105.300px,21.060px 21.060px,21.060px 21.060px;
  background-position:0 625px,1183px 0,24.700px 0,0 98.500px,3.640px 0,0 14.260px;
  background-repeat:no-repeat,no-repeat,repeat,repeat,repeat,repeat}
.models{position:absolute;left:0;top:0;width:1917px;height:853px}

/* browser */
.browser{position:absolute;left:4px;top:8px;width:300px}
.panel-head,.comments{height:23px;background:#f0f0f0;border:1px solid #d4d4d4;display:flex;align-items:center;padding-left:24px;position:relative}
.panel-head{padding-left:5px}
.chev{width:10px;height:7px;margin-right:9px}
.panel-title{color:#666;font-size:11.200px}
.panel-btn{width:10px;height:10px;margin-left:auto;margin-right:11px}
.tree-wrap{display:flex;margin-top:4px;height:770px}
.scrollbar{width:6px;margin:2px 0 0 4px;height:764px;background:#c6c6c6;border-radius:3px 3px 0 0}
.scroll-thumb{height:423px;background:#9a9a9a;border-radius:3px}
.tree{flex:1}
.row{height:24px;display:flex;align-items:center}
.l0{padding-left:6px}
.l1{padding-left:24px}
.l2{padding-left:62px}
.tw{width:12px;height:14px;margin-right:8px}
.chip{height:20px;background:#f0f0f0;display:flex;align-items:center;padding-right:9px}
.p3{padding-left:3px}
.chip-root{padding-left:2px;padding-right:5px}
.bar{width:5px;height:20px;margin-right:3px}
.bar-root{width:3px;height:16px;background:#e48fe0}
.eye{width:16px;height:12px}
.ico{width:16px;height:16px}
.ico-gear{width:14px;height:14px}
.m9{margin-left:9px}
.lbl{margin-left:14px;color:#444;font-size:11px;white-space:nowrap}
.lbl-13{margin-left:12px;font-size:10.800px}
.lbl-15{margin-left:14px}
.sel{margin-left:6px;width:118px;height:16px;background:#9a9a9a;display:flex;align-items:center;padding-left:3px}
.sel-name{margin-left:14px;color:#fff;font-weight:bold;font-size:11.500px;letter-spacing:.4px}
.radio{width:12px;height:12px;margin-left:4px}

.comments{position:absolute;left:4px;top:824px;width:300px;height:25px}

.navbar{position:absolute;left:842px;top:823px;width:237px;height:23px;background:#f0f0f0;display:flex;align-items:center;padding-left:1.500px}
.nav{width:17px;height:17px;margin-right:9px}
.nav-c{margin-right:5px}
.nav-l{margin-right:10px}
.nav-t{margin-right:1px}
.nav-z{margin-right:8px}
.ncaret{width:0;height:0;border:3.500px solid transparent;border-top:4px solid #444;border-bottom:0;margin-right:5.500px}

.viewcube{position:absolute;left:1831px;top:40px;width:52px;height:52px}
.vc-face{width:52px;height:52px;border:1px solid #999;background:#f4f4f5;display:flex;align-items:center;justify-content:center;box-shadow:1px 2px 5px rgba(0,0,0,.08)}
.vc-inner{width:33px;height:33px;background:#e7e8ea;display:flex;align-items:center;justify-content:center}
.vc-text{font:bold 10px "Open Sans",sans-serif;color:#a0a3a8;transform:scaleX(.9)}
.axis{position:absolute;font:bold 13px Roboto,sans-serif;line-height:13px;transform:scaleX(.75)}
.ax-y{left:-1px;top:-14px;color:#9bf09b}
.ax-z{left:-9px;top:49px;color:#8888f8}
.ax-x{left:53px;top:43px;color:#fb9a9a}

/* timeline */
.timeline{flex:1;background:#f0f0f0;border-top:1px solid #dedede;display:flex;position:relative}
.hscroll{position:absolute;left:4px;top:0;width:65px;height:7px;background:#ccc;border-radius:0 0 4px 4px}
.player{width:144px;display:flex;align-items:center;padding:8px 0 0 11px;gap:12.800px}
.player svg{width:12px;height:14px}
.player svg:nth-child(3){height:16px}
.track{display:flex;gap:4px;height:41px;padding-top:7px;background:linear-gradient(#ccc,#ccc) 10px 39px/1710px 2px no-repeat}
.tg b{display:block;height:6px;margin-bottom:1px}
.ti{display:flex;gap:4px}
.ti i{display:block;position:relative;width:20px;height:20px;padding:1px 2px 0}
.ti i::after{content:"";position:absolute;left:10px;top:20px;width:1px;height:5px;background:#aaa}
.ti svg{width:16px;height:16px}
.ti .hl{background:#e8e81f;box-shadow:0 0 0 2px #e8e81f}
.pink b{background:#e48fe0}.blue b{background:#5b8dec}.purple b{background:#c08cee}.rose b{background:#e890bc}.orange b{background:#ffb36b}.mint b{background:#6cfcd8}.lime b{background:#d6d84e}.coral b{background:#e9724c}
.tl-gear{width:16px;height:16px;margin:20px 0 0 23px}
```
